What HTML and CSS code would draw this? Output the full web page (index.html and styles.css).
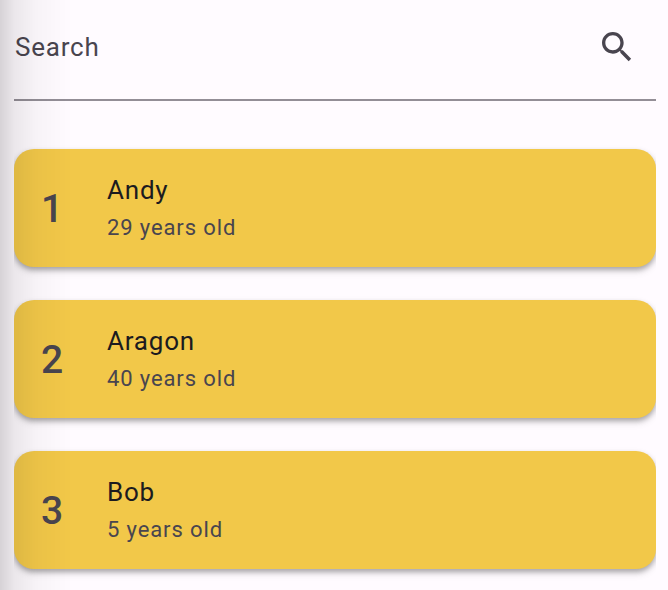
FILE: index.html
```html
<!DOCTYPE html>
<html lang="en">
<head>
<meta charset="utf-8">
<title>People</title>
<link rel="stylesheet" href="styles.css">
</head>
<body>
<main class="page">
  <form class="search" role="search">
    <input class="search-input" type="text" placeholder="Search" aria-label="Search">
    <button class="search-button" type="button" aria-label="Search">
      <svg class="search-icon" viewBox="0 0 24 24" aria-hidden="true"><path d="M15.5 14h-.79l-.28-.27C15.41 12.59 16 11.11 16 9.5 16 5.91 13.09 3 9.5 3S3 5.91 3 9.5 5.91 16 9.5 16c1.61 0 3.09-.59 4.23-1.57l.27.28v.79l5 4.99L20.49 19l-4.99-5zm-6 0C7.01 14 5 11.99 5 9.5S7.01 5 9.5 5 14 7.01 14 9.5 11.99 14 9.5 14z"/></svg>
    </button>
  </form>
  <ul class="people">
    <li class="card"><span class="rank">1</span><div><p class="name">Andy</p><p class="age">29 years old</p></div></li>
    <li class="card"><span class="rank">2</span><div><p class="name">Aragon</p><p class="age">40 years old</p></div></li>
    <li class="card"><span class="rank">3</span><div><p class="name">Bob</p><p class="age">5 years old</p></div></li>
  </ul>
</main>
</body>
</html>
```
FILE: styles.css
```css
* {
  box-sizing: border-box;
}

body {
  margin: 0;
  min-height: 100vh;
  background: #fffbff;
  font-family: Roboto, sans-serif;
  color: #49454f;
}

/* Soft shade falling on the left edge of the page */
body::after {
  content: "";
  position: fixed;
  inset: 0 auto 0 0;
  width: 72px;
  background: linear-gradient(to right, rgba(0, 0, 0, 0.16), rgba(0, 0, 0, 0.08) 20%, rgba(0, 0, 0, 0.03) 50%, rgba(0, 0, 0, 0.01) 80%, transparent);
  pointer-events: none;
}

.page {
  padding: 0 12px 0 14px;
}

.search {
  display: flex;
  align-items: center;
  height: 101px;
  padding: 0 19px 6px 1px;
  border-bottom: 2px solid #938e96;
}

.search-input {
  flex: 1;
  min-width: 0;
  padding: 0;
  border: 0;
  outline: 0;
  background: none;
  font: 400 26px/36px Roboto, sans-serif;
  letter-spacing: 0.03em;
  color: inherit;
}

.search-input::placeholder {
  color: #49454f;
  opacity: 1;
}

.search-button {
  display: flex;
  padding: 0;
  border: 0;
  background: none;
  color: inherit;
}

.search-icon {
  width: 40px;
  height: 40px;
  fill: currentColor;
}

.people {
  display: grid;
  gap: 33px;
  margin: 48px 0 0;
  padding: 0 0 20px;
  list-style: none;
  /* Keeps card shadows inside the column */
  clip-path: inset(-8px 0);
}

.card {
  display: grid;
  grid-template-columns: 66px 1fr;
  align-items: center;
  height: 118px;
  padding: 0 27px;
  border-radius: 20px;
  background: #f2c849;
  box-shadow: 0 3px 5px rgba(0, 0, 0, 0.26), 0 4px 8px rgba(0, 0, 0, 0.12);
}

.rank {
  padding-top: 2px;
  font-size: 39px;
  font-weight: 500;
  line-height: 48px;
}

.name,
.age {
  margin: 0;
}

.name {
  font-size: 26px;
  line-height: 40px;
  letter-spacing: 0.03em;
  color: #1c1b1f;
}

.age {
  font-size: 22px;
  line-height: 36px;
  letter-spacing: 0.04em;
}
```
